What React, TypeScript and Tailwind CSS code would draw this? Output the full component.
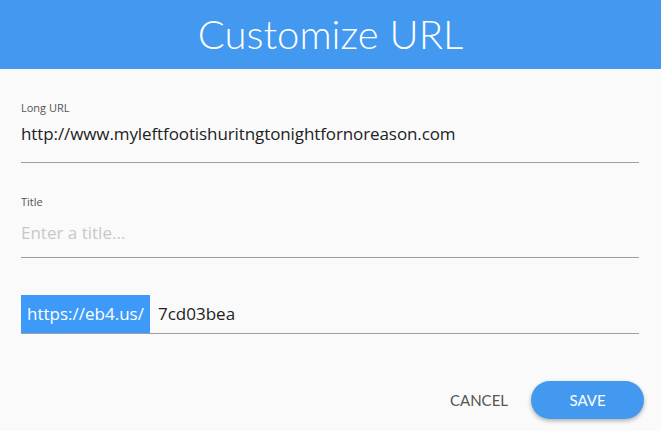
import React from "react";

export default function App() {
  return (
    <div className="w-[661px] h-[431px] bg-[#fafafa] flex flex-col overflow-hidden">
      <div className="h-[69px] bg-[#4299ef] flex items-center justify-center shrink-0">
        <h1 className="text-white text-[40px] font-light leading-none pb-[2px]" style={{ fontFamily: "Lato, 'Open Sans', sans-serif" }}>
          Customize URL
        </h1>
      </div>
      <div className="flex flex-col pl-[21px] pr-[22px]" style={{ fontFamily: "'Open Sans', sans-serif" }}>
        <div className="mt-[31px] flex flex-col">
          <label className="text-[11px] text-[#555] leading-[16px]">Long URL</label>
          <div className="mt-[6px] h-[41px] border-b border-[#9e9e9e] text-[17px] text-[#222] leading-[24px] tracking-[-0.1px]">
            http://www.myleftfootishuritngtonightfornoreason.com
          </div>
        </div>
        <div className="mt-[31px] flex flex-col">
          <label className="text-[11px] text-[#555] leading-[16px]">Title</label>
          <div className="mt-[11px] h-[37px] border-b border-[#9e9e9e] text-[17px] text-[#c8c8c8] leading-[24px]">
            Enter a title...
          </div>
        </div>
        <div className="mt-[37px] flex items-stretch h-[39px] border-b border-[#9e9e9e]">
          <div className="w-[129px] bg-[#3d9af9] text-white text-[17px] flex items-center justify-center">
            https://eb4.us/
          </div>
          <div className="pl-[8px] text-[17px] text-[#222] flex items-center">7cd03bea</div>
        </div>
        <div className="mt-[47px] flex justify-end items-center" style={{ fontFamily: "Lato, sans-serif" }}>
          <button className="text-[15px] text-[#555] mr-[23px]">CANCEL</button>
          <button className="w-[113px] h-[38px] rounded-full bg-[#4299ef] text-white text-[15px] shadow-[0_2px_4px_rgba(0,0,0,0.3)] -mr-[5px]">
            SAVE
          </button>
        </div>
      </div>
    </div>
  );
}
